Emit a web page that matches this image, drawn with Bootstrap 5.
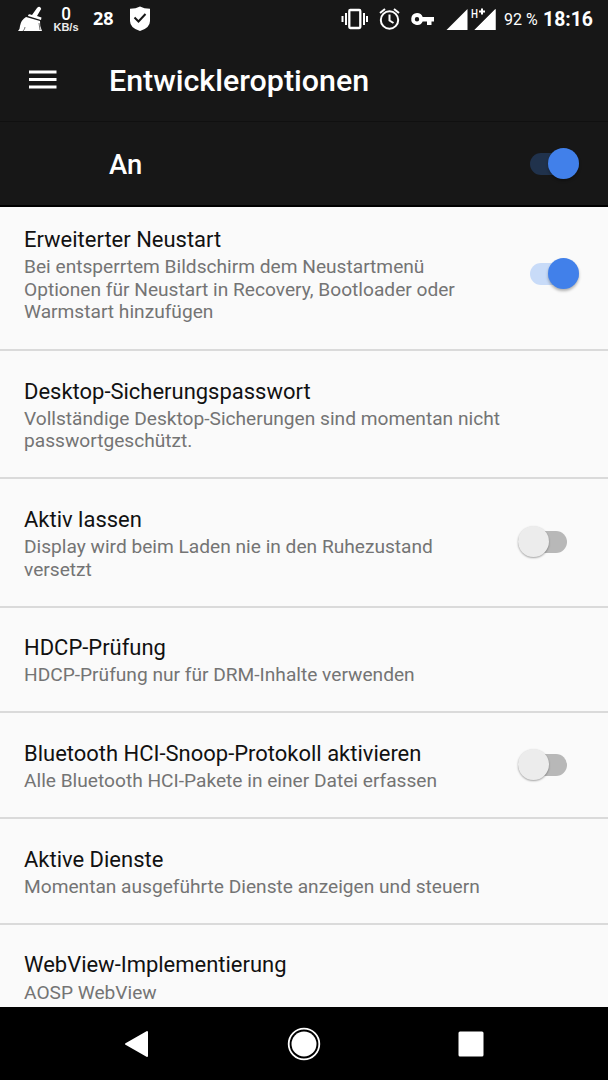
<!DOCTYPE html>
<html lang="de">
<head>
<meta charset="utf-8">
<meta name="viewport" content="width=device-width, initial-scale=1">
<title>Entwickleroptionen</title>
<link href="https://cdn.jsdelivr.net/npm/bootstrap@5.3.0/dist/css/bootstrap.min.css" rel="stylesheet">
<style>
body{font-family:Roboto,"Liberation Sans",sans-serif;background:#fafafa;color:#111}
.screen{height:1080px}
.dark{background:#171717;color:#fff}
.statusbar{height:40px;padding:0 15px 0 17px}
.kbs{width:28px;margin-left:8px;text-align:center;padding-top:5px}
.kbs b{font:500 19px/17px Roboto,sans-serif;transform:scaleX(.9)}
.kbs span{font:700 11px/11px "Liberation Sans",sans-serif;color:#ececec}
.temp{font:700 18px/37px "Noto Sans",sans-serif;margin-left:13px;width:22px}
.shield{margin-left:14px}
.battery{font-size:16px;line-height:40px;margin-left:8px;width:34px}
.clock{font-size:19.4px;font-weight:700;line-height:40px;margin-left:5px;width:50px}
.toolbar{height:82px;padding-left:29px;border-bottom:1px solid #101010}
.toolbar svg{margin-top:-2px}
.toolbar h1{font-size:30.4px;font-weight:500;line-height:36px;margin:0 0 0 52px}
.master{height:85px;padding:1px 29.5px 0 109px;border-bottom:2px solid #000}
.master span{font-size:27.4px;font-weight:500;line-height:32px;padding-top:1px}
.pref{border-bottom:2px solid #dadada;padding:27.6px 24px 24.5px;flex:none;background:#fafafa}
.pref:first-child{padding:20.3px 24px 25.3px}
.pref h2{font-size:21.97px;font-weight:400;line-height:26px;margin:0 0 3.2px}
.pref p{font-size:19.15px;line-height:22.45px;color:#747474;margin:0}
.sw{width:49px;height:32px;flex:none;position:relative}
.sw::before{content:"";position:absolute;top:5px;left:0;width:49px;height:22px;border-radius:11px;background:#c8dbf8}
.sw::after{content:"";position:absolute;top:0;right:0;width:31px;height:31px;border-radius:50%;background:#4180ea;box-shadow:0 2px 3px rgba(0,0,0,.3)}
.master .sw::before{background:#20324c}
.pref .sw{margin:-3px 5px 0 0}
.pref .sw.off{margin-right:17px}
.sw.off::before{background:#b8b8b8}
.sw.off::after{right:auto;left:0;background:#ececec;box-shadow:0 1px 2px rgba(0,0,0,.35)}
.navkeys{height:73px;background:#000;flex:none;padding:0 124px 0 123px}
svg{flex:none;display:block}
</style>
</head>
<body>
<div class="screen d-flex flex-column overflow-hidden">
  <header class="dark flex-shrink-0">
    <div class="statusbar d-flex align-items-start">
      <svg width="27" height="40" fill="#fff"><path d="M15 15 20 8q2-2 3.500-.5t0 2.500l-3.500 6 4.500 1.500-.5 2.500-13-4q0-3 4-1zM9 17l14 4q-.5 5 2 10H1q2-2 2-5 1-6 6-9z"/><path d="M8 27q0 2-2 4M22 23l1 7" stroke="#777" fill="none"/></svg>
      <div class="kbs d-flex flex-column"><b>0</b><span>KB/s</span></div>
      <div class="temp">28</div>
      <svg class="shield" width="22" height="40"><path d="M11 6.500q4 2.300 10 2.300V21q0 7-10 10Q1 28 1 21V8.800q6 0 10-2.300z" fill="#fff"/><path d="m5.500 17.500 4 4 7-7.500" fill="none" stroke="#171717" stroke-width="2"/></svg>
      <div class="d-flex ms-auto">
        <svg width="28" height="40" fill="none" stroke="#fff" stroke-width="2"><rect x="9.300" y="10" width="11" height="18" rx="1" stroke-width="2.300"/><path d="M6 13v12M2.500 16v6M24 13v12M27 16v6"/></svg>
        <svg width="22" height="40" style="margin-left:10px" fill="none" stroke="#fff" stroke-width="2"><circle cx="11.500" cy="20" r="8.700"/><path d="m2 13 5-4M21 13l-5-4M11.500 14.500V20.500l4 2.500"/></svg>
        <svg width="25" height="40" style="margin-left:10px" fill="#fff"><path fill-rule="evenodd" d="M7 13a6 6 0 0 1 5.700 4H24v4.500h-2.500V25H17v-3.500h-4.300A6 6 0 1 1 7 13zm0 4a2.200 2.200 0 1 0 0 4.400A2.200 2.200 0 0 0 7 17z"/></svg>
        <svg width="51" height="40" style="margin-left:10px" fill="#fff"><path d="M22.500 9v21H1.500zM50.500 9v21H29.500z"/><path d="M24 7h17v8l-8 7h-9z" fill="#171717"/><path d="M50.500 9v21H29.500z"/><text x="26" y="18" font-family="Roboto" font-size="12.500" font-weight="500" textLength="7" lengthAdjust="spacingAndGlyphs">H</text><path d="M34 10.500h2V8.500h2v2h2v2h-2v2h-2v-2h-2z"/></svg>
        <div class="battery text-nowrap">92 %</div>
        <div class="clock">18:16</div>
      </div>
    </div>
    <div class="toolbar d-flex align-items-center">
      <svg width="28" height="20" fill="#fff"><path d="M0 .5h27.500v3H0zM0 8h27.500v3H0zM0 15.500h27.500v3H0z"/></svg>
      <h1>Entwickleroptionen</h1>
    </div>
    <div class="master d-flex align-items-center justify-content-between"><span>An</span><div class="sw"></div></div>
  </header>
  <main class="d-flex flex-column flex-grow-1 overflow-hidden">
    <section class="pref d-flex align-items-center justify-content-between"><div><h2>Erweiterter Neustart</h2><p>Bei entsperrtem Bildschirm dem Neustartmenü<br>Optionen für Neustart in Recovery, Bootloader oder<br>Warmstart hinzufügen</p></div><div class="sw"></div></section>
    <section class="pref"><h2>Desktop-Sicherungspasswort</h2><p>Vollständige Desktop-Sicherungen sind momentan nicht<br>passwortgeschützt.</p></section>
    <section class="pref d-flex align-items-center justify-content-between"><div><h2>Aktiv lassen</h2><p>Display wird beim Laden nie in den Ruhezustand<br>versetzt</p></div><div class="sw off"></div></section>
    <section class="pref"><h2>HDCP-Prüfung</h2><p>HDCP-Prüfung nur für DRM-Inhalte verwenden</p></section>
    <section class="pref d-flex align-items-center justify-content-between"><div><h2>Bluetooth HCI-Snoop-Protokoll aktivieren</h2><p>Alle Bluetooth HCI-Pakete in einer Datei erfassen</p></div><div class="sw off"></div></section>
    <section class="pref"><h2>Aktive Dienste</h2><p>Momentan ausgeführte Dienste anzeigen und steuern</p></section>
    <section class="pref"><h2>WebView-Implementierung</h2><p>AOSP WebView</p></section>
  </main>
  <nav class="navkeys d-flex align-items-center justify-content-between">
    <svg width="28" height="30"><path d="M24 3v24L3 15z" fill="#fff" stroke="#fff" stroke-width="2" stroke-linejoin="round"/></svg>
    <svg width="34" height="34" style="margin-left:-2px"><circle cx="17" cy="17" r="15.300" fill="none" stroke="#fff" stroke-width="1.800"/><circle cx="17" cy="17" r="12.500" fill="#fff"/></svg>
    <svg width="26" height="26"><rect x=".5" y=".5" width="25" height="25" rx="1.500" fill="#fff"/></svg>
  </nav>
</div>
<script src="https://cdn.jsdelivr.net/npm/bootstrap@5.3.0/dist/js/bootstrap.bundle.min.js"></script>
</body>
</html>
